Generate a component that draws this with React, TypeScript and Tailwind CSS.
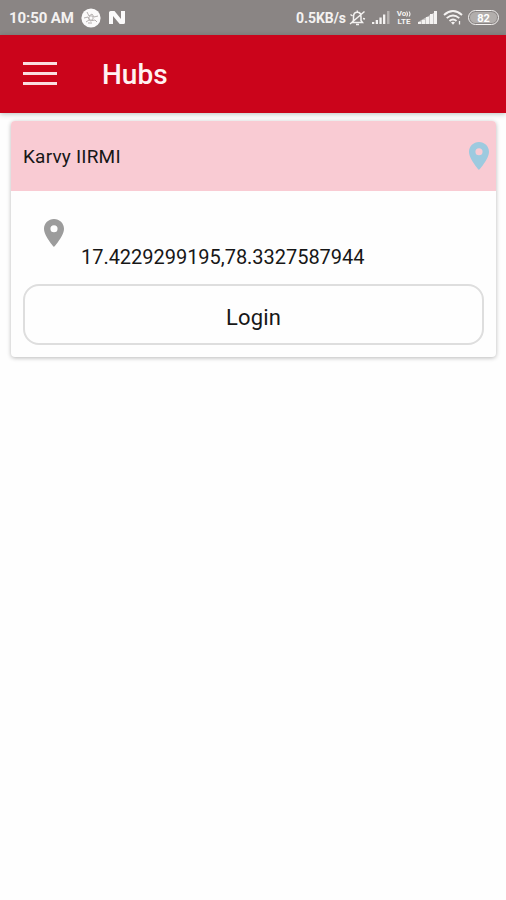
function Pin({ className }: { className: string }) {
  return (
    <svg viewBox="5 2 14 20" className={className} fill="currentColor" preserveAspectRatio="none">
      <path d="M12 2C8.13 2 5 5.13 5 9c0 5.25 7 13 7 13s7-7.75 7-13c0-3.87-3.13-7-7-7zm0 9.5a2.5 2.5 0 1 1 0-5 2.5 2.5 0 0 1 0 5z" />
    </svg>
  );
}

function StatusBar() {
  return (
    <header className="flex h-[35px] items-center bg-[#8a8584] pl-[9px] pr-[7px] text-[#f4f2f1]">
      <span className="w-[72px] whitespace-nowrap text-[15px] font-bold leading-[18px] tracking-[-0.1px]">10:50 AM</span>
      <svg className="size-5 shrink-0" viewBox="0 0 20 20">
        <circle cx="10" cy="10" r="9.6" fill="#fbfafa" />
        <g fill="none" stroke="#b5b0af" strokeWidth="1">
          <path d="M6 4l2 4 3-2 2 3 4-1M3 10l4-1 2 4 5-1 2 2M5 14l3-2M7 15h4" />
          <circle cx="10" cy="10" r="2.2" />
        </g>
      </svg>
      <svg className="ml-2 h-[13px] w-4 shrink-0" viewBox="0 0 16 13" fill="#fbfafa">
        <path d="M0 1.5Q0 0 1.7 0h3.8L12 8V0h4v11.5q0 1.5-1.5 1.5h-3.8L4 5v8H0z" />
      </svg>
      <div className="ml-auto flex items-center">
        <span className="w-[53px] whitespace-nowrap text-[14px] font-bold leading-[18px] tracking-[-0.05px]">0.5KB/s</span>
        <svg className="h-4 w-[17px]" viewBox="0 0 17 16" fill="none" stroke="#f4f2f1" strokeWidth="1.5">
          <path d="M3 12.5h10.5l-1.5-2V7c0-3-1.5-4.7-3.7-4.7S4.5 4 4.5 7v3.5zM7 14.5h3M1 14L15.5 1.5M8.3.5v2M1.5 4.5l2 1.5M16 9l-2-.5" />
        </svg>
        <svg className="ml-[6px] h-[13px] w-[18px]" viewBox="0 0 18 13" fill="#f4f2f1">
          <path d="M0 11h2.3v2H0zM3.7 9H6v4H3.7zM7.4 6.5h2.3V13H7.4zM11 3.5h2.3V13H11z" />
          <path d="M15 0h2.5v13H15z" opacity=".4" />
        </svg>
        <div className="ml-[6px] flex w-[16px] flex-col items-center text-[8px] font-bold leading-[8px]">
          <span className="flex items-center">
            Vo
            <svg className="h-[6px] w-[5px]" viewBox="0 0 5 6" fill="none" stroke="currentColor" strokeWidth="1.1">
              <path d="M.5.5q2 2.5 0 5M3 .5q2 2.5 0 5" />
            </svg>
          </span>
          <span>LTE</span>
        </div>
        <svg className="ml-[6px] h-[13px] w-[19px]" viewBox="0 0 19 13" fill="#f4f2f1">
          <path d="M0 11h3v2H0zM4 9h3v4H4zM8 6h3v7H8zM12 3h3v10h-3zM16 0h3v13h-3z" />
          <path d="M0 11L19 0v13H0z" opacity=".6" />
        </svg>
        <svg className="ml-[6px] h-[15px] w-[20px]" viewBox="0 0 20 15" fill="none" stroke="#f4f2f1" strokeWidth="1.9">
          <path d="M1 5Q10-2.8 19 5M3.7 8.1q6.3-5.4 12.6 0M6.5 11q3.5-3 7 0" />
          <path d="M8 12.4q2-1.5 4 0L10 14.8z" fill="#f4f2f1" stroke="none" />
          <path d="M16.5 11v3.5" strokeWidth="1.3" />
        </svg>
        <div className="ml-[5px] flex h-[15px] w-[31px] items-center justify-center rounded-full border-[1.5px] border-[#f4f2f1] p-px">
          <div className="flex h-full w-full items-center justify-center rounded-full bg-[#b2aeac] pt-px text-[11px] font-bold leading-none text-white">82</div>
        </div>
      </div>
    </header>
  );
}

export default function App() {
  return (
    <div className="flex h-[900px] w-full flex-col overflow-hidden bg-[#fefefe] font-[Roboto,sans-serif] text-[#171717]">
      <StatusBar />
      <nav className="flex h-[77.5px] shrink-0 items-center bg-[#cb041b] pl-[23px] shadow-[0_1px_5px_rgba(0,40,30,0.28)]">
        <button aria-label="Menu" className="flex w-[34px] flex-col gap-[7px]">
          <span className="h-[3px] bg-[#fbdde0]" />
          <span className="h-[3px] bg-[#fbdde0]" />
          <span className="h-[3px] bg-[#fbdde0]" />
        </button>
        <h1 className="ml-[45px] pt-[2px] text-[28px] font-medium leading-8 text-[#fff2f2]">Hubs</h1>
      </nav>
      <main className="pl-[11px] pr-[10px] pt-[8.5px]">
        <section className="h-[236px] overflow-hidden rounded-[4px] bg-[#fefefe] shadow-[0_1px_4px_rgba(0,0,0,0.28)]">
          <div className="flex h-[70px] items-center justify-between bg-[#f9cbd3] pl-3 pr-[7px]">
            <h2 className="pt-[2px] text-[19px] leading-6 tracking-[0.2px]">Karvy IIRMI</h2>
            <Pin className="h-7 w-5 text-[#9dcadf]" />
          </div>
          <div className="flex h-[93px] pl-[33px] pt-[28px]">
            <Pin className="h-7 w-5 text-[#9c9c9c]" />
            <span className="ml-[17px] mt-[26px] text-[20px] leading-6 tracking-[-0.03px]">17.4229299195,78.3327587944</span>
          </div>
          <button className="mx-3 flex h-[61px] w-[461px] items-center justify-center rounded-[16px] border-[2.5px] border-[#dedede] pt-[5px] text-[22px] tracking-[0.2px]">Login</button>
        </section>
      </main>
    </div>
  );
}
